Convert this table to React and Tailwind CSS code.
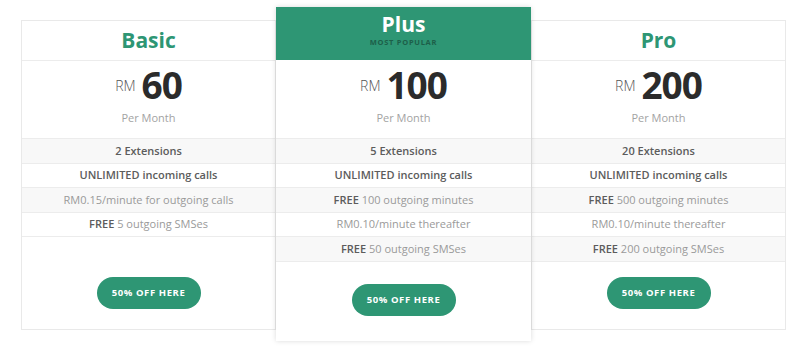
import React from 'react';

const plans = [
    {
        name: 'Basic',
        price: '60',
        features: [
            { text: '2 Extensions', strong: true },
            { text: 'UNLIMITED incoming calls', strong: true },
            { text: 'RM0.15/minute for outgoing calls' },
            { bold: 'FREE', text: ' 5 outgoing SMSes' },
        ],
    },
    {
        name: 'Plus',
        price: '100',
        popular: true,
        features: [
            { text: '5 Extensions', strong: true },
            { text: 'UNLIMITED incoming calls', strong: true },
            { bold: 'FREE', text: ' 100 outgoing minutes' },
            { text: 'RM0.10/minute thereafter' },
            { bold: 'FREE', text: ' 50 outgoing SMSes' },
        ],
    },
    {
        name: 'Pro',
        price: '200',
        features: [
            { text: '20 Extensions', strong: true },
            { text: 'UNLIMITED incoming calls', strong: true },
            { bold: 'FREE', text: ' 500 outgoing minutes' },
            { text: 'RM0.10/minute thereafter' },
            { bold: 'FREE', text: ' 200 outgoing SMSes' },
        ],
    },
];

const FeatureRow = ({ feature, index }) => (
    <div
        className={`h-[24.5px] shrink-0 flex items-center justify-center border-t border-[#ececec] text-[11px] ${
            index % 2 === 0 ? 'bg-[#f8f8f8]' : 'bg-white'
        }`}
    >
        {feature.strong ? (
            <span className="font-semibold text-[#5c5c5c]">{feature.text}</span>
        ) : (
            <span className="text-[#9a9a9a]">
                {feature.bold && <span className="font-semibold text-[#5c5c5c]">{feature.bold}</span>}
                {feature.text}
            </span>
        )}
    </div>
);

const PlanCard = ({ plan }) => {
    const popular = plan.popular;
    return (
        <div
            className={`w-[255px] bg-white flex flex-col ${
                popular
                    ? '-mt-[13px] -mb-[11px] z-10 shadow-[0_0_5px_rgba(0,0,0,0.15)]'
                    : 'border border-[#e9e9e9]'
            }`}
        >
            {popular ? (
                <div className="h-[53px] shrink-0 bg-[#2e9674] flex flex-col items-center pt-[4px]">
                    <h2 className="text-[21px] leading-[26px] font-bold text-white">{plan.name}</h2>
                    <span className="text-[7.5px] font-bold tracking-[0.7px] text-[#1d5f49] leading-[10px]">
                        MOST POPULAR
                    </span>
                </div>
            ) : (
                <div className="h-[40px] shrink-0 border-b border-[#ececec] flex items-center justify-center">
                    <h2 className="text-[21px] font-bold text-[#2e9674]">{plan.name}</h2>
                </div>
            )}

            <div
                className={`shrink-0 flex flex-col items-center ${
                    popular ? 'h-[78px] pt-[5px]' : 'h-[77px] pt-[4px]'
                }`}
            >
                <div className="flex items-center gap-[6px]">
                    <span className="text-[14px] text-[#555] font-light">RM</span>
                    <span className="text-[37px] leading-[40px] font-bold text-[#2b2b2b] tracking-[-1px]">
                        {plan.price}
                    </span>
                </div>
                <span className="mt-[5px] text-[11px] text-[#a3a3a3]">Per Month</span>
            </div>

            <div className="shrink-0 border-b border-[#ececec]">
                {plan.features.map((f, i) => (
                    <FeatureRow key={i} feature={f} index={i} />
                ))}
            </div>

            <div className={`mt-auto shrink-0 flex justify-center ${popular ? 'pb-[25px]' : 'pb-[20px]'}`}>
                <button className="h-[32px] w-[104px] rounded-full bg-[#2e9674] text-white text-[9.5px] font-bold tracking-[0.6px]">
                    50% OFF HERE
                </button>
            </div>
        </div>
    );
};

export default function App() {
    return (
        <div
            className="w-[800px] h-[354px] bg-white flex items-stretch pl-[21px] pt-[20px] pb-[24px]"
            style={{ fontFamily: '"Open Sans", "Liberation Sans", sans-serif' }}
        >
            {plans.map((p) => (
                <PlanCard key={p.name} plan={p} />
            ))}
        </div>
    );
}
